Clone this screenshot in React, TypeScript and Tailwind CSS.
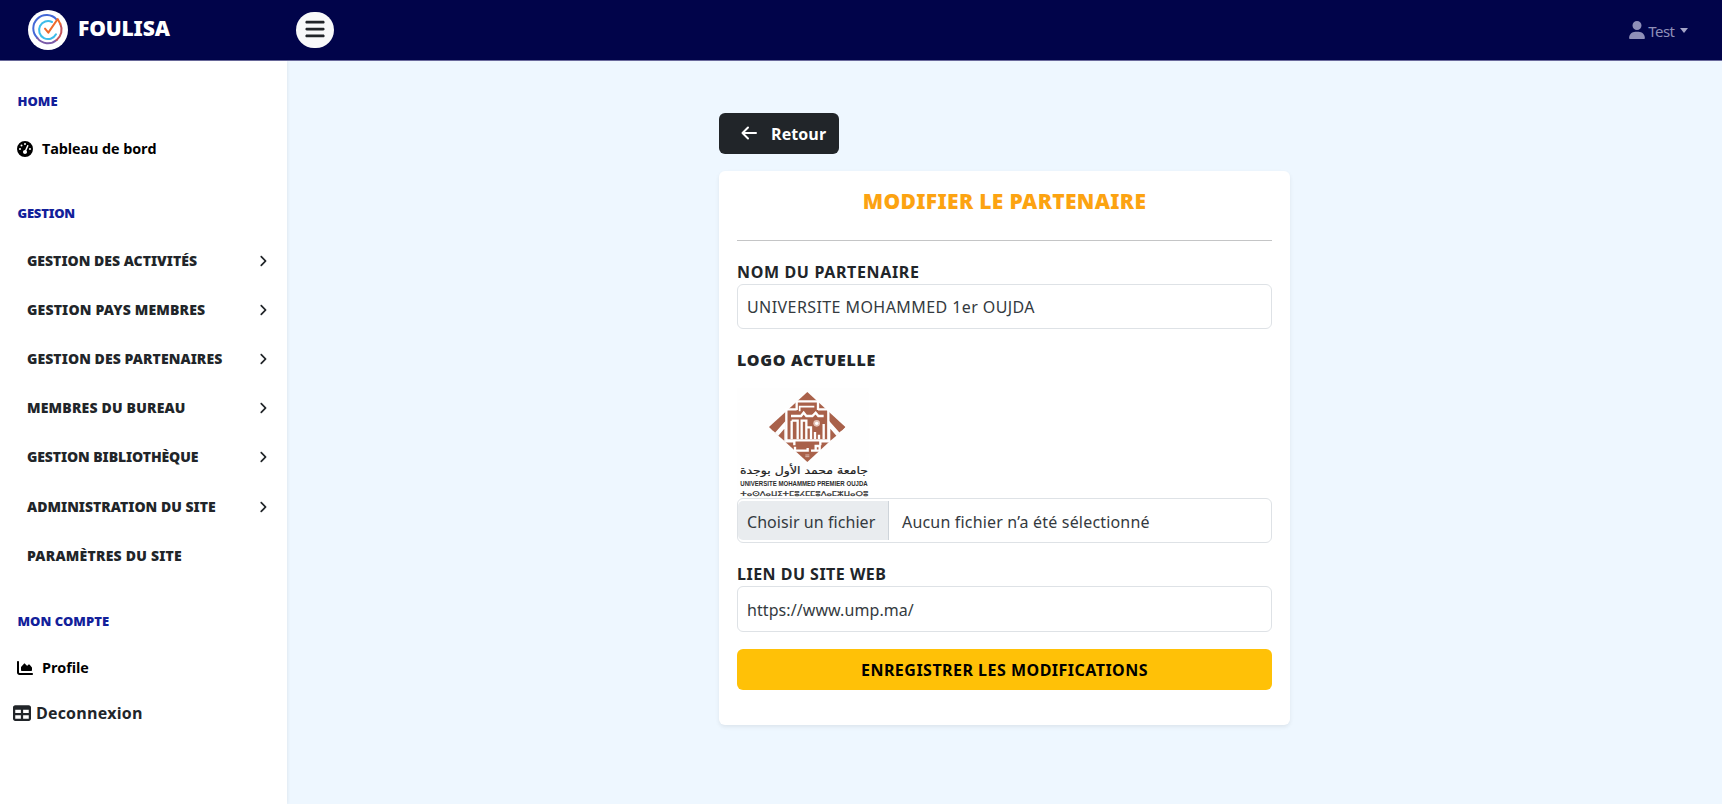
import { FaGaugeHigh, FaChartArea, FaTable, FaUser, FaBars, FaAngleRight } from "react-icons/fa6";

const menu = [
  { label: "GESTION DES ACTIVITÉS", arrow: true, cls: "" },
  { label: "GESTION PAYS MEMBRES", arrow: true, cls: "tracking-[0.17px]" },
  { label: "GESTION DES PARTENAIRES", arrow: true, cls: "tracking-[0.07px]" },
  { label: "MEMBRES DU BUREAU", arrow: true, cls: "tracking-[0.18px]" },
  { label: "GESTION BIBLIOTHÈQUE", arrow: true, cls: "tracking-[-0.1px]" },
  { label: "ADMINISTRATION DU SITE", arrow: true, cls: "" },
  { label: "PARAMÈTRES DU SITE", arrow: false, cls: "tracking-[0.22px]" },
];

function BrandMark() {
  return (
    <svg viewBox="0 0 120 120" className="size-10">
      <circle cx="60" cy="60" r="60" fill="#fff" />
      <g fill="none" strokeLinecap="round" strokeWidth="6">
        <path d="M86 29A40 40 0 1 0 28 84" stroke="#4468d6" />
        <path d="M28 84A40 40 0 0 0 86 90" stroke="#7a5aa8" />
        <path d="M86 90A40 40 0 0 0 97 42" stroke="#c2545a" />
        <path d="M72 36A27 27 0 1 0 84 73" stroke="#3dbcea" />
        <path d="M51 56L61 68L89 27L97 42" stroke="#ee6a2c" strokeLinejoin="round" />
      </g>
    </svg>
  );
}

function UniversityLogo() {
  return (
    <svg viewBox="21 24 396 330" className="h-[110px] w-[132px] overflow-visible">
      <rect x="21" y="24" width="396" height="330" fill="#fefefe" />
      <g transform="translate(105 24)">
        <path d="M127 12L241 117L127 222L12 117Z" fill="#a9614a" />
        <path d="M30 134L62 98V164ZM224 134L192 98V164Z" fill="#fefefe" />
        <path d="M14 118L56 80V92L24 128ZM240 118L198 80V92L230 128Z" fill="#a9614a" />
        <path d="M40 143L58 122V158ZM214 143L196 122V158Z" fill="#a9614a" />
        <g fill="none" stroke="#fff" strokeWidth="7">
          <path d="M95 66V40H159V66" />
          <path d="M95 64H64V160H88V172M159 64H190V160H166V172" />
          <path d="M78 84H108L116 74L124 84H142L152 74L160 84H176" />
          <path d="M80 98V154M80 98H98V154M110 154V98H124V154M124 118H138V154M150 154V132M162 154V140M176 154V108" />
          <path d="M66 157H188" />
          <path d="M90 176V188H128V180M138 188H164V174H152V188" />
          <path d="M104 70V56H148" strokeWidth="5" />
        </g>
        <circle cx="155" cy="106" r="10" fill="#e3c1b5" />
        <circle cx="155" cy="106" r="5" fill="#fff" />
        <path d="M121 201H133M121 206H133" stroke="#dcb9ad" strokeWidth="3" />
      </g>
      <text x="222" y="283" textAnchor="middle" direction="rtl" textLength="384" lengthAdjust="spacingAndGlyphs" fontFamily="DejaVu Sans, sans-serif" fontSize="32" fill="#222" stroke="#222" strokeWidth="0.6">جامعة محمد الأول بوجدة</text>
      <text x="31" y="317" textLength="382" lengthAdjust="spacingAndGlyphs" fontFamily="Liberation Sans, sans-serif" fontWeight="700" fontSize="21" fill="#2c2c2c">UNIVERSITE MOHAMMED PREMIER OUJDA</text>
      <text x="31" y="347" textLength="384" lengthAdjust="spacingAndGlyphs" fontFamily="DejaVu Sans, sans-serif" fontSize="20" fill="#2c2c2c" stroke="#2c2c2c" strokeWidth="0.6">ⵜⴰⵙⴷⴰⵡⵉⵜⵎⵓⵃⵎⵎⵓⴷⴰⵎⵣⵡⴰⵔⵓ</text>
    </svg>
  );
}

export default function App() {
  return (
    <div className="flex h-[804px] w-full flex-col overflow-hidden bg-[#eef7ff] font-['Noto_Sans',sans-serif] text-[#212529]">
      <header className="flex h-[61px] shrink-0 items-center border-b border-[#6a6a9c] bg-[#01044a]">
        <div className="flex w-[296px] items-center pl-7">
          <BrandMark />
          <span className="-mt-[5px] ml-2.5 text-[21px] leading-6 font-black tracking-[-0.15px] text-white">FOULISA</span>
        </div>
        <button className="flex h-9 w-[38px] items-center justify-center rounded-full bg-[#f8f9fa] pb-0.5">
          <FaBars className="size-[22px] text-[#212529]" />
        </button>
        <div className="mt-0.5 mr-[34.5px] ml-auto flex items-center text-[#8f8fb8]">
          <FaUser className="mr-[3px] -mt-0.5 h-[18px] w-4" />
          <span className="text-[15px] tracking-[-0.5px]">Test</span>
          <span className="-mt-0.5 ml-[5px] border-x-[4.5px] border-t-[5px] border-x-transparent border-t-[#a5a5c8]" />
        </div>
      </header>
      <div className="flex flex-1">
        <aside className="flex w-[287px] shrink-0 flex-col bg-white shadow-[1px_0_3px_rgba(0,0,0,0.06)]">
          <div className="mt-[30px] h-5 pl-[17.5px] text-[13px] leading-5 font-black text-[#12209a]">HOME</div>
          <div className="mt-7 flex h-5 items-center pl-[17px] font-['Open_Sans',sans-serif] text-[14.4px] leading-5 font-bold tracking-[-0.1px] text-black">
            <FaGaugeHigh className="mr-[9px] size-4" />Tableau de bord
          </div>
          <div className="mt-11 h-5 pl-[17.5px] text-[13px] leading-5 font-black tracking-[-0.2px] text-[#12209a]">GESTION</div>
          <nav className="mt-[13.5px] flex flex-col">
            {menu.map((m) => (
              <div key={m.label} className="flex h-[49.1px] items-center justify-between pr-[17px] pl-[27px] text-[14px] leading-5 font-black">
                <span className={m.cls}>{m.label}</span>
                {m.arrow && <FaAngleRight className="size-[14px]" />}
              </div>
            ))}
          </nav>
          <div className="mt-[31px] h-5 pl-[17.5px] text-[13px] leading-5 font-black tracking-[0.03px] text-[#12209a]">MON COMPTE</div>
          <div className="mt-[27px] flex h-5 items-center pl-[17px] font-['Open_Sans',sans-serif] text-[14.4px] leading-5 font-bold tracking-[-0.1px] text-black">
            <FaChartArea className="mr-[9px] size-4" />Profile
          </div>
          <div className="mt-[23px] flex h-6 items-center pl-[13px] font-['Open_Sans',sans-serif] text-[16px] leading-6 font-bold tracking-[0.2px]">
            <FaTable className="mr-[5px] size-[18px]" />Deconnexion
          </div>
        </aside>
        <main className="flex flex-1 flex-col items-center pt-[52px]">
          <div className="w-[571px]">
            <button className="flex h-[41px] w-[120px] items-center rounded-md bg-[#212529] pl-[22px] font-['Open_Sans',sans-serif] text-[16px] font-bold tracking-[0.1px] text-white">
              <svg viewBox="0 0 16 14" className="-mt-px mr-3.5 h-[14px] w-4 fill-none stroke-white stroke-2" strokeLinecap="round" strokeLinejoin="round"><path d="M15 7H1.5M7 1.5L1.5 7L7 12.5" /></svg>
              Retour
            </button>
            <section className="mt-[17px] flex h-[554px] flex-col rounded-md bg-white px-[18px] pt-[18px] shadow-[0_2px_4px_rgba(0,0,0,0.075)]">
              <h1 className="text-center text-[21px] leading-[25px] font-black tracking-[0.34px] text-[#fca311]">MODIFIER LE PARTENAIRE</h1>
              <hr className="mt-[26px] border-[#c4c5c6]" />
              <label className="mt-[19px] h-6 text-[16px] leading-6 font-bold tracking-[0.65px]">NOM DU PARTENAIRE</label>
              <div className="flex h-[45px] items-center rounded-md border border-[#dee2e6] px-[9px] text-[16px] tracking-[0.42px] text-[#343a40]">UNIVERSITE MOHAMMED 1er OUJDA</div>
              <label className="mt-[19px] h-6 text-[16px] leading-6 font-black tracking-[0.7px]">LOGO ACTUELLE</label>
              <div className="mt-4 h-[110px]"><UniversityLogo /></div>
              <div className="flex h-[45px] items-stretch rounded-md border border-[#dee2e6] text-[16px] text-[#343a40]">
                <div className="my-0.5 flex w-[151px] items-center rounded-l-[5px] border-r border-[#ced4da] bg-[#e9ecef] pt-0.5 pl-[9px] tracking-[0.06px]">Choisir un fichier</div>
                <div className="flex items-center pt-0.5 pl-[13px] tracking-[0.18px]">Aucun fichier n’a été sélectionné</div>
              </div>
              <label className="mt-[19px] h-6 text-[16px] leading-6 font-bold tracking-[0.48px]">LIEN DU SITE WEB</label>
              <div className="flex h-[46px] items-center rounded-md border border-[#dee2e6] px-[9px] pt-0.5 text-[16px] tracking-[0.08px] text-[#343a40]">https://www.ump.ma/</div>
              <button className="mt-[17px] h-[41px] rounded-md bg-[#ffc107] text-[16px] font-bold tracking-[0.48px] text-black">ENREGISTRER LES MODIFICATIONS</button>
            </section>
          </div>
        </main>
      </div>
    </div>
  );
}
